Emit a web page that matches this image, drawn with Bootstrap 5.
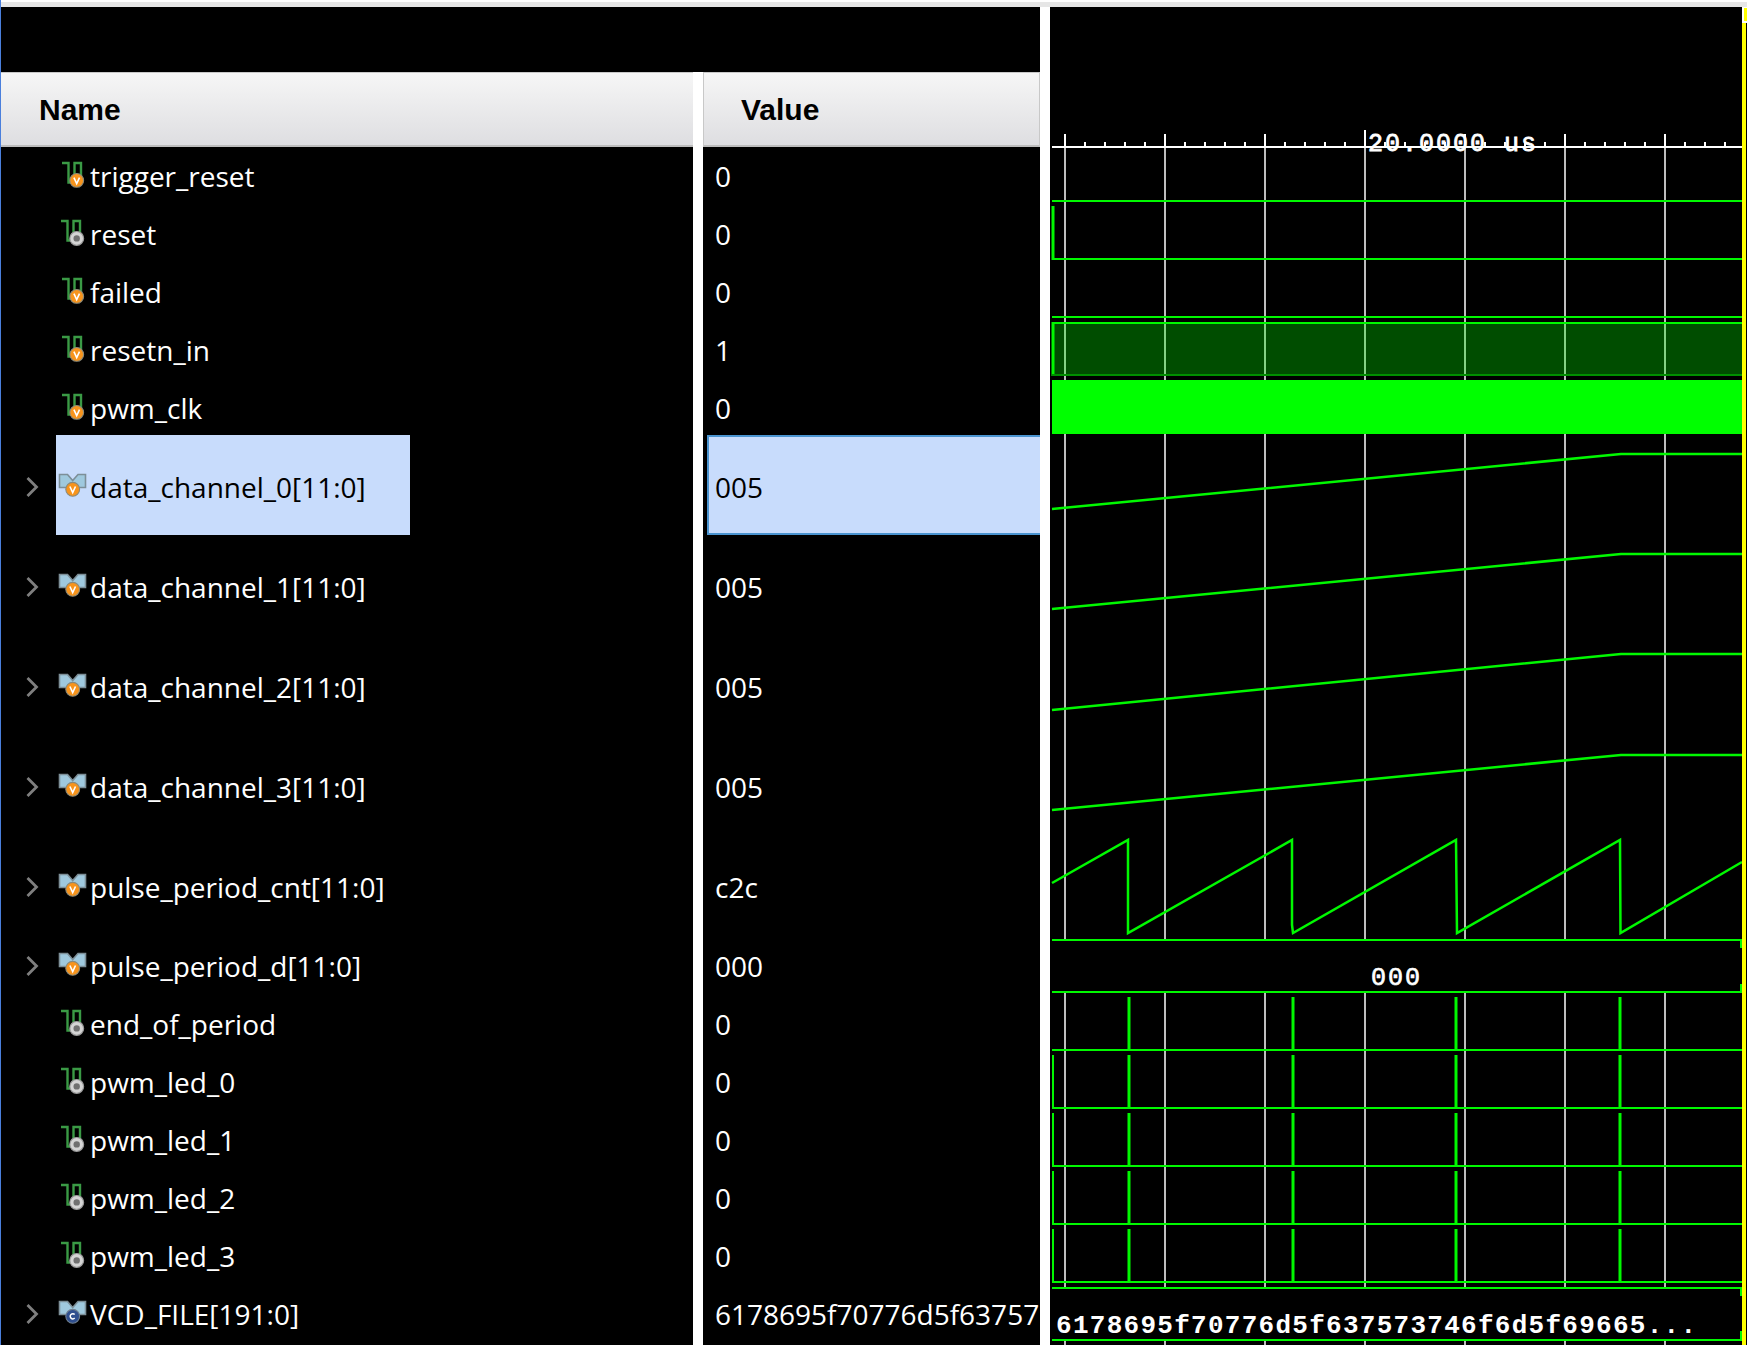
<!DOCTYPE html>
<html lang="en">
<head>
<meta charset="utf-8">
<title>Waveform</title>
<link href="https://cdn.jsdelivr.net/npm/bootstrap@5.3.0/dist/css/bootstrap.min.css" rel="stylesheet">
<style>
html,body{height:1345px;overflow:hidden;background:#000;margin:0}
.vw-page{width:1747px;height:1345px;border-left:1px solid #4a7fdc;background:#000;font-family:"Open Sans","Noto Sans",sans-serif;color:#fff}
.vw-topwhite{height:2px;background:#fff}
.vw-topgrey{height:5px;background:#e6e6e6}
.vw-main{height:1338px}
.vw-left{width:1039px}
.vw-spacer{height:65px;background:#000}
.vw-cols{height:1273px}
.vw-gap{width:10px;background:#fff;flex:none}
.vw-name{width:692px;flex:none}
.vw-value{width:337px;flex:none;overflow:hidden}
.vw-head{height:75px;background:linear-gradient(#f6f6f6,#dedee1);border-top:1px solid #c8c8c8;border-bottom:2px solid #bdbdbd;color:#000;font:700 30px "Liberation Sans",sans-serif;display:flex;align-items:center;padding-top:2px}
.vw-name .vw-head{padding-left:38px}
.vw-value .vw-head{padding-left:37px;border-left:1px solid #c8c8c8;border-right:1px solid #c8c8c8}
.vw-row{height:58px;display:flex;align-items:center;font-size:28px;line-height:1;white-space:nowrap}
.vw-row.vw-tall{height:100px}
.vw-name .vw-row{position:relative;padding-left:89px}
.vw-value .vw-row{padding-left:12px}
.vw-chev{position:absolute;left:25px;top:50%;margin-top:-11px}
.vw-ico{position:absolute;left:56px;top:50%;margin-top:-15px}
.vw-sel{color:#000;background:#c8dcfc}
.vw-name .vw-sel{position:absolute;left:55px;top:-2px;width:354px;height:100px}
.vw-name .vw-row.vw-selrow>span:last-child{position:relative;color:#000}
.vw-value .vw-row.vw-selval{padding-left:0}
.vw-value .vw-sel{margin:-2px 0 2px 4px;height:100px;flex:1;display:flex;align-items:center;padding:4px 0 0 6px;border:2px solid #4a94d0;border-right:0}
.vw-wave{width:697px;flex:none;display:block;background:#000}
.vw-wave text{fill:#fff;font-family:"Liberation Mono",monospace}
</style>
</head>
<body>
<div class="vw-page">
  <div class="vw-topwhite"></div>
  <div class="vw-topgrey"></div>
  <div class="vw-main d-flex">
    <div class="vw-left d-flex flex-column">
      <div class="vw-spacer"></div>
      <div class="vw-cols d-flex">
        <div class="vw-name" id="names"><div class="vw-head">Name</div></div>
        <div class="vw-gap"></div>
        <div class="vw-value" id="values"><div class="vw-head">Value</div></div>
      </div>
    </div>
    <div class="vw-gap"></div>
    <svg class="vw-wave" id="wave" width="697" height="1338" viewBox="1050 7 697 1338" xmlns="http://www.w3.org/2000/svg"></svg>
  </div>
</div>
<script>
var rows=[
["trigger_reset","0","s","o"],["reset","0","s","g"],["failed","0","s","o"],["resetn_in","1","s","o"],["pwm_clk","0","s","o"],
["data_channel_0[11:0]","005","v","o",1],["data_channel_1[11:0]","005","v","o"],["data_channel_2[11:0]","005","v","o"],["data_channel_3[11:0]","005","v","o"],["pulse_period_cnt[11:0]","c2c","v","o"],
["pulse_period_d[11:0]","000","v2","o"],["end_of_period","0","s","g"],["pwm_led_0","0","s","g"],["pwm_led_1","0","s","g"],["pwm_led_2","0","s","g"],["pwm_led_3","0","s","g"],["VCD_FILE[191:0]","6178695f70776d5f63757","v2","c"]];
function icon(t,c){
 var s='<svg class="vw-ico" width="32" height="30" viewBox="0 0 32 30">';
 var cx,cy;
 if(t=="s"){cx=19.7;cy=19.4;
  var d=c=="g"?-1:0;
  s+='<path d="M'+(5+d)+' 2H'+(11.5+d)+'V21.5H'+(17.5+d)+'V2H'+(24+d)+'V15" fill="none" stroke="#3a9a45" stroke-width="2.4"/>';}
 else{cx=15.7;cy=17.3;
  s+='<path d="M2.5 2.5H10.5L15.7 8.5L21 2.5H28.5V15.5H2.5Z" fill="#9fc9de" stroke="#7d8f98" stroke-width="1.6"/>';}
 if(c=="o")s+='<circle cx="'+cx+'" cy="'+cy+'" r="6.9" fill="#f7941d" stroke="#8a8a7a" stroke-width="1.1"/><path d="M'+(cx-2.8)+' '+(cy-2.8)+'L'+cx+' '+(cy+3.2)+'L'+(cx+2.8)+' '+(cy-2.8)+'" fill="none" stroke="#fff" stroke-width="1.6"/>';
 if(c=="g")s+='<circle cx="'+cx+'" cy="'+cy+'" r="6.9" fill="#d4d4d4" stroke="#9a9a9a" stroke-width="1.2"/><circle cx="'+cx+'" cy="'+cy+'" r="3.2" fill="#707070"/>';
 if(c=="c")s+='<circle cx="'+cx+'" cy="'+cy+'" r="6.9" fill="#2f4f8f" stroke="#6f7f90" stroke-width="1.1"/><path d="M'+(cx+2)+' '+(cy-1.8)+'A2.6 2.6 0 1 0 '+(cx+2)+' '+(cy+1.8)+'" fill="none" stroke="#fff" stroke-width="1.5"/>';
 return s+'</svg>';
}
var n=document.getElementById('names'),v=document.getElementById('values');
rows.forEach(function(r,i){
 var tall=(i>=5&&i<=9);
 var cls='vw-row'+(tall?' vw-tall':'');
 var hasChev=r[2]!="s";
 var h='<div class="'+cls+(r[4]?' vw-selrow':'')+'">';
 if(r[4])h+='<div class="vw-sel"></div>';
 if(hasChev)h+='<svg class="vw-chev" width="14" height="22" viewBox="0 0 14 22"><path d="M1.5 2L10.5 11L1.5 20" fill="none" stroke="#7f7f7f" stroke-width="2.8"/></svg>';
 h+=icon(r[2]=="s"?"s":"v",r[3]);
 h+='<span>'+r[0]+'</span></div>';
 n.insertAdjacentHTML('beforeend',h);
 var w=r[4]?'<div class="vw-row vw-tall vw-selval"><div class="vw-sel">'+r[1]+'</div></div>':'<div class="'+cls+'"><span>'+r[1]+'</span></div>';
 v.insertAdjacentHTML('beforeend',w);
});
var o='',G='#00f800',L=1052,R=1742;
var gx=[1065,1165,1265,1365,1465,1565,1665];
gx.forEach(function(x){o+='<rect x="'+(x-1)+'" y="147" width="2" height="1198" fill="#bdbdbd"/>';});
function line(x1,y1,x2,y2,w,c){o+='<line x1="'+x1+'" y1="'+y1+'" x2="'+x2+'" y2="'+y2+'" stroke="'+(c||G)+'" stroke-width="'+(w||2)+'"/>';}
function hl(y){line(L,y,R,y);}
function black(y,h){o+='<rect x="1050" y="'+y+'" width="692" height="'+h+'" fill="#000"/>';}
black(941,51);black(1289,50);
line(L,147,R,147,2,'#fff');
gx.forEach(function(x){line(x,x==1365?130:134,x,147,2,'#fff');});
for(var x=1065;x<1742;x+=20){if((x-1065)%100)line(x,142,x,147,2,'#fff');}
hl(201);line(1053,206,1053,260,3);hl(259);hl(317);
o+='<rect x="1052" y="322" width="690" height="54" fill="#00ff00" fill-opacity=".3"/>';
line(L,323,R,323);line(1053,322,1053,376,3);line(L,375,R,375,2,'#008f00');
o+='<rect x="1052" y="380" width="690" height="54" fill="#00ff00"/>';
[[509,454],[609,554],[710,654],[810,755]].forEach(function(a){o+='<polyline fill="none" stroke="'+G+'" stroke-width="2.5" points="1052,'+a[0]+' 1621,'+a[1]+' 1742,'+a[1]+'"/>';});
o+='<polyline fill="none" stroke="'+G+'" stroke-width="2.5" points="1052,883 1128,840 1128,933 1292,840 1292,925 1293,933 1456,840 1457,933 1620,840 1620.5,933 1742,862"/>';
hl(940);
o+='<text x="1371" y="985" font-size="25" font-weight="400" stroke="#fff" stroke-width=".7" textLength="49">000</text>';
hl(992);
[1050,1108,1166,1224,1282].forEach(function(y,i){
 hl(y);
 if(i)line(1053,y-53,1053,y);
 [1129,1293,1620].forEach(function(x){line(x,y-53,x,y,3);});
 line(1456,y-53,1456,y,3);
});
hl(1288);
o+='<text x="1056" y="1333" font-size="26" font-weight="700" textLength="640" lengthAdjust="spacing">6178695f70776d5f637573746f6d5f69665...</text>';
hl(1340);
line(1741,940,1741,948,2);line(1741,984,1741,992,2);line(1741,1288,1741,1296,2);line(1741,1331,1741,1340,2);
o+='<text x="1368" y="151" font-size="25" textLength="168" lengthAdjust="spacing" stroke="#fff" stroke-width=".8">20.0000 us</text>';
o+='<rect x="1742" y="23" width="4" height="1322" fill="#ffff00"/>';
o+='<rect x="1742" y="7" width="5" height="16" fill="#fff"/><rect x="1744" y="8" width="3" height="13" fill="#ffff00"/>';
document.getElementById('wave').innerHTML=o;
</script>
<script src="https://cdn.jsdelivr.net/npm/bootstrap@5.3.0/dist/js/bootstrap.bundle.min.js"></script>
</body>
</html>
